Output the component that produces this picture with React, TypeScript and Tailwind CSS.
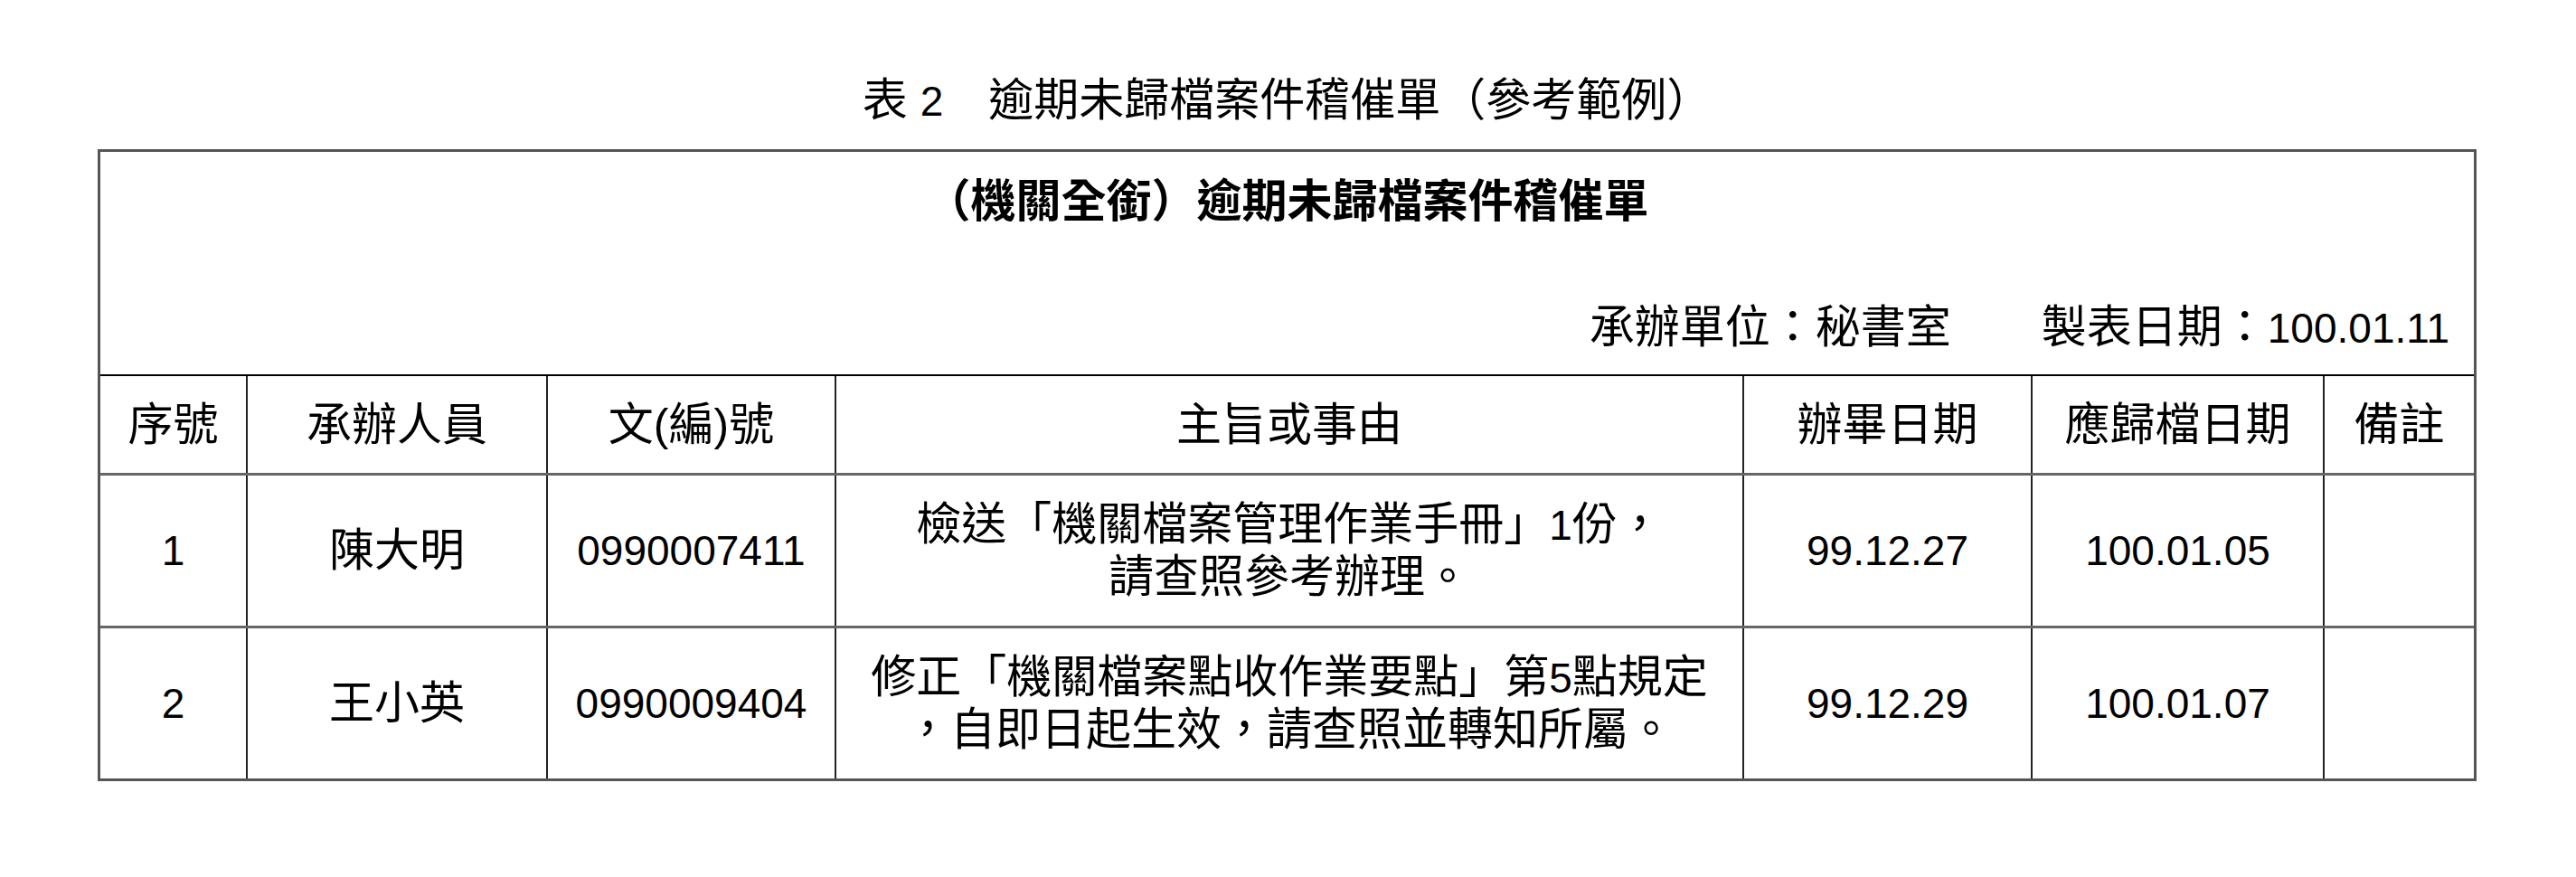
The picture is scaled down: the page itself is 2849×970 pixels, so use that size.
import React from "react"

const Num = ({ children }: { children: React.ReactNode }) => (
  <span className="text-[46px]">{children}</span>
)

const headers = ["序號", "承辦人員", "文(編)號", "主旨或事由", "辦畢日期", "應歸檔日期", "備註"]

const rows = [
  {
    no: "1",
    person: "陳大明",
    docNo: "0990007411",
    subject: [
      <>檢送「機關檔案管理作業手冊」<Num>1</Num>份，</>,
      <>請查照參考辦理。</>,
    ],
    done: "99.12.27",
    due: "100.01.05",
  },
  {
    no: "2",
    person: "王小英",
    docNo: "0990009404",
    subject: [
      <>修正「機關檔案點收作業要點」第<Num>5</Num>點規定</>,
      <>，自即日起生效，請查照並轉知所屬。</>,
    ],
    done: "99.12.29",
    due: "100.01.07",
  },
]

const cols = "grid grid-cols-[161px_332px_319px_1004px_319px_323px_167px]"
const cell = "flex flex-col items-center justify-center text-center"
const divider = "border-l-2 border-[#222]"

export default function App() {
  return (
    <div className="min-h-[970px] w-[2849px] bg-white pl-[108px] pt-[83px] text-[50px] text-black font-['Liberation_Sans','Noto_Sans_CJK_TC',sans-serif]">
      <div className="w-[2631px]">
        <div className="text-center leading-[56px] whitespace-nowrap">
          表 <Num>2</Num>　逾期未歸檔案件稽催單（參考範例）
        </div>

        <div className="mt-[25px] border-[3px] border-[#555]">
          {/* caption */}
          <div className="flex h-[246px] flex-col px-[27px] pt-[27px] pb-[23px]">
            <div className="text-center font-bold leading-[56px] whitespace-nowrap">（機關全銜）逾期未歸檔案件稽催單</div>
            <div className="mt-auto text-right leading-[56px] whitespace-nowrap">
              承辦單位：秘書室　　製表日期：<Num>100.01.11</Num>
            </div>
          </div>

          {/* header */}
          <div className={`${cols} h-[109px] border-t-2 border-black`}>
            {headers.map((h, i) => (
              <div key={h} className={`${cell} ${i > 0 ? divider : ""} leading-[56px] whitespace-nowrap`}>
                {h}
              </div>
            ))}
          </div>

          {rows.map((r) => (
            <div key={r.no} className={`${cols} h-[169px] border-t-[3px] border-[#666]`}>
              <div className={cell}><Num>{r.no}</Num></div>
              <div className={`${cell} ${divider}`}>{r.person}</div>
              <div className={`${cell} ${divider}`}><Num>{r.docNo}</Num></div>
              <div className={`${cell} ${divider} leading-[57px]`}>
                {r.subject.map((line, i) => (
                  <div key={i} className="whitespace-nowrap">{line}</div>
                ))}
              </div>
              <div className={`${cell} ${divider}`}><Num>{r.done}</Num></div>
              <div className={`${cell} ${divider}`}><Num>{r.due}</Num></div>
              <div className={`${cell} ${divider}`}></div>
            </div>
          ))}
        </div>
      </div>
    </div>
  )
}
